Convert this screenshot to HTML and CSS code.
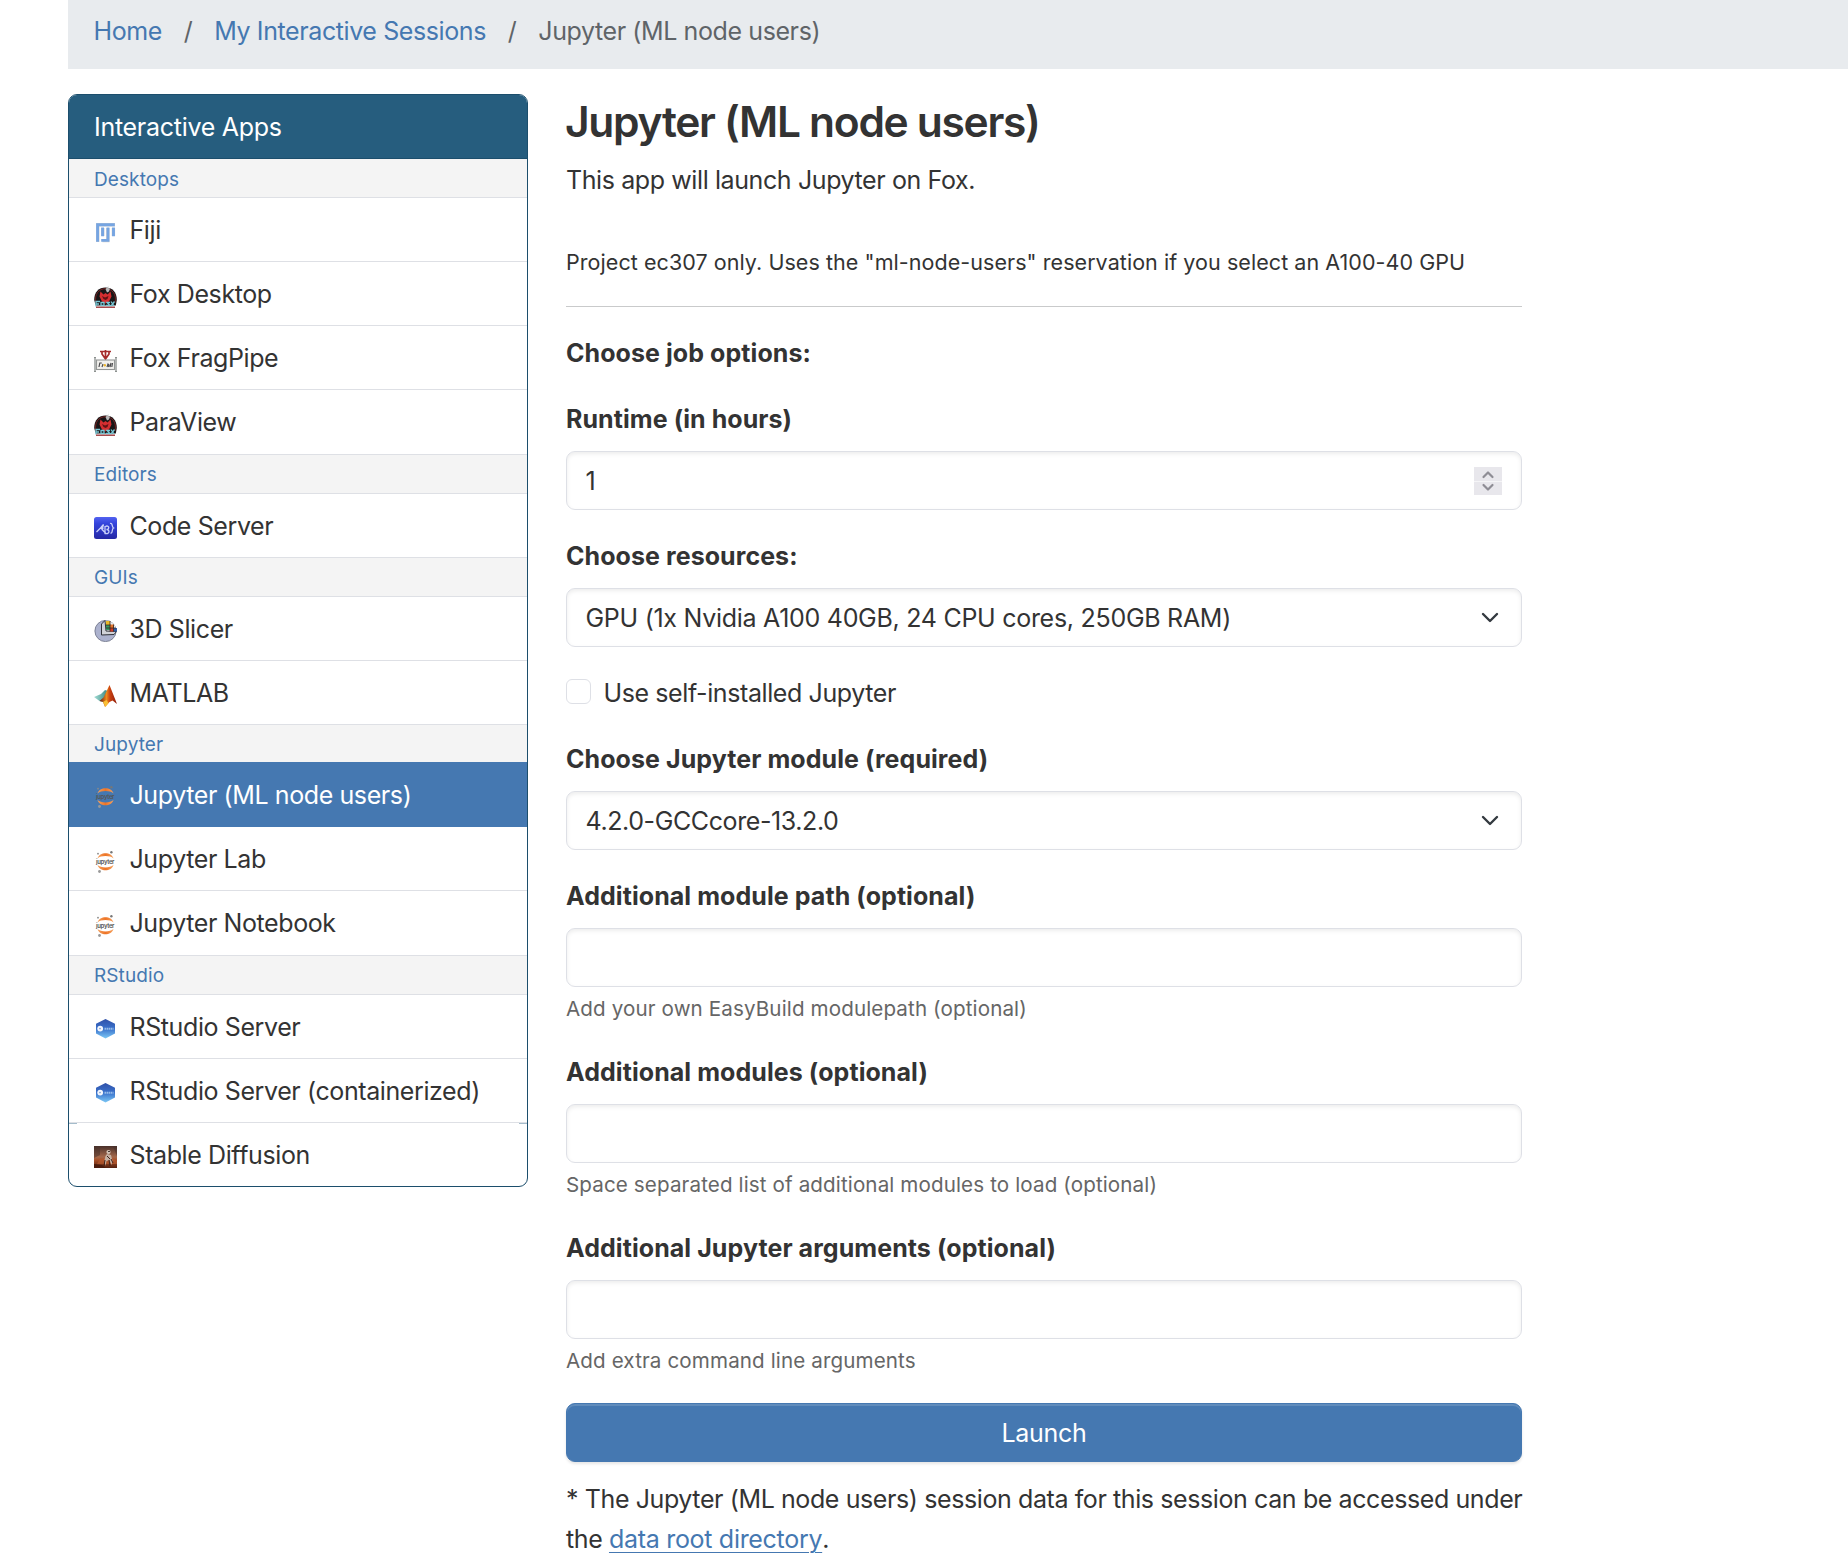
FILE: index.html
```html
<!DOCTYPE html>
<html lang="en">
<head>
<meta charset="utf-8">
<title>Jupyter (ML node users)</title>
<link rel="stylesheet" href="styles.css">
</head>
<body>
<svg class="gradients" aria-hidden="true">
  <defs>
    <linearGradient id="g-code" x1="0" y1="0" x2="0" y2="1"><stop offset="0" stop-color="#5362f0"/><stop offset=".3" stop-color="#3444dc"/><stop offset="1" stop-color="#2528a4"/></linearGradient>
    <linearGradient id="g-hex" x1="0" y1="0" x2="0" y2="1"><stop offset="0" stop-color="#2f50a8"/><stop offset=".5" stop-color="#3a72cc"/><stop offset="1" stop-color="#7cc8f5"/></linearGradient>
    <linearGradient id="g-mat" x1="0" y1="0" x2="1" y2="0"><stop offset="0" stop-color="#64140c"/><stop offset=".4" stop-color="#ee8a1c"/><stop offset=".6" stop-color="#c9400f"/><stop offset="1" stop-color="#8e1d0c"/></linearGradient>
    <linearGradient id="g-teal" x1="0" y1="0" x2="1" y2="0"><stop offset="0" stop-color="#a4ded6"/><stop offset="1" stop-color="#39857f"/></linearGradient>
    <linearGradient id="g-mars" x1="0" y1="0" x2="0" y2="1"><stop offset="0" stop-color="#49302a"/><stop offset=".5" stop-color="#a5694b"/><stop offset=".65" stop-color="#a64d26"/><stop offset="1" stop-color="#53200f"/></linearGradient>
    <linearGradient id="g-jup" x1="0" y1="0" x2="1" y2="0"><stop offset="0" stop-color="#f5a25f"/><stop offset=".5" stop-color="#ee7426"/><stop offset="1" stop-color="#f5a25f"/></linearGradient>
  </defs>
</svg>
<svg class="sprite" aria-hidden="true">
  <symbol id="fiji" viewBox="0 0 23 22">
    <g fill="none" stroke="#d5d2cf" stroke-width="3.400"><path d="M3.700 20V2.800H21M8.700 6v8M8.400 18.600h5.400V6M19.400 6v8"/></g>
    <g fill="none" stroke="#76a5e2" stroke-width="2.900"><path d="M3.600 19.800V2.700h17.200M8.600 5.500v8.800M7.200 18.400H14V5.500M19.500 5.500v8.800"/></g>
  </symbol>
  <symbol id="fox" viewBox="0 0 23 22">
    <path d="M.2 14C0 6 5 1.500 11.500 1.500S23 6 22.800 14l-1 5.500h-20z" fill="#191617"/>
    <path d="M2 17C0 8 5 2.700 11.500 2.700S23 8 21 17" fill="none" stroke="#8c2423" stroke-width=".8"/>
    <path d="M6.500 5.500l3 3 2-1.500 2 1.500 3-3 1 5-2.500 5-3.500 2-3.500-2-2.500-5z" fill="#d52e30"/>
    <path d="M8 10l3 1.600L14.500 10l-1 3-2 1-2-1z" fill="#611315"/>
    <path d="M11.500 3l3-3-.5 2 2 .5-1 3-2 1z" fill="#b9b9ba"/>
    <path d="M2 20.500v-5h4M2 18h3M7 16.500h3v3H7zM12 19.500h4l-3-3h3M17 15.500l3 4.500M20.500 15.500L17 20" fill="none" stroke="#78c8d6" stroke-width="1.300"/>
    <path d="M2 21.200h19" stroke="#962a2c" stroke-width="1.300"/>
  </symbol>
  <symbol id="frag" viewBox="0 0 23 22">
    <path d="M6 1.500h11M8 1v3l3.500 5L15 4V1M11.500 0v9" fill="none" stroke="#a62c2c" stroke-width="1.700"/>
    <path d="M1 7v15M22 7v15" stroke="#8c918f" stroke-width="2"/>
    <path d="M1 8v13M22 8v13" stroke="#eee" stroke-width=".8"/>
    <rect x="2.500" y="10" width="18" height="9.500" fill="#f1f0ed" stroke="#949796" stroke-width="1.100"/>
    <path d="M5 17l.8-4h2M8 17l1-3M13 17l1-3 1 1-.5 2M16 17l1-4M18.500 13l-.7 4" fill="none" stroke="#4d4d50" stroke-width="1.200"/>
    <circle cx="10.800" cy="15.300" r="1.200" fill="#edb52d"/>
  </symbol>
  <symbol id="code" viewBox="0 0 23 22">
    <rect width="23" height="22" rx="2.500" fill="url(#g-code)"/>
    <path d="M2.500 15l4-4 3-3.500-1.500 5 4 4M6.500 11l3 .5M11 9v7.500c5 1 5-4 1.500-4 4-.5 2-5-1-3M16 6.500c3-1 1.500 3.500 3.500 4.500-2 1-.5 5.500-3 5" fill="none" stroke="#c9cff9" stroke-width="1.300"/>
  </symbol>
  <symbol id="slicer" viewBox="0 0 23 22">
    <circle cx="11.500" cy="11" r="10.600" fill="#acb2ce" stroke="#6b7084" stroke-width=".8"/>
    <path d="M11 .5l.5 11 11 .5C23 6 18 .5 11 .5z" fill="#eceded"/>
    <path d="M11 .5L7.500 4v11L20 14.500l2.500-3L12 11z" fill="#d0d2d8" stroke="#303239"/>
    <path d="M12 1h4v4h-4z" fill="#e8ba28"/><path d="M12 5h4v5h-4z" fill="#359862"/><path d="M16 4.500h4v3.500h-4z" fill="#e4742c"/><path d="M16 8h3.500v3.500H16z" fill="#cc3b28"/><path d="M19.500 8H23v3.500h-3.500z" fill="#2e5ca5"/>
    <path d="M12 5h4.500M12 8h10M16 1v10.500M19.500 4.500v7" stroke="#382620" stroke-width=".8"/>
  </symbol>
  <symbol id="matlab" viewBox="0 0 23 22">
    <path d="M0 12l7-3 4-4 3 1-5 11-3.500-1z" fill="url(#g-teal)"/>
    <path d="M5.500 16l4-3.500L15.500 0 23 19l-4.500-3.500-3 1.500-4.500 5-2-5z" fill="url(#g-mat)"/>
    <path d="M9 17l2.500 5 3-4-2-3z" fill="#f9be35"/>
  </symbol>
  <symbol id="jupyter" viewBox="0 0 23 22">
    <path d="M3.500 7.500c2-7 14-7 16 0-3.500-3.200-12.500-3.200-16 0zM3.500 14c2 7 14 7 16 0-3.500 3.200-12.500 3.200-16 0z" fill="url(#g-jup)"/>
    <circle cx="17.400" cy="1.300" r="1.200" fill="#777"/><circle cx="4" cy="2.700" r=".9" fill="#888"/><circle cx="5.500" cy="20.500" r="1.400" fill="#999"/>
    <text x="2" y="12.500" textLength="18.500" font-family="Inter, sans-serif" font-size="6" font-weight="600" letter-spacing="0" fill="#555">jupyter</text>
  </symbol>
  <symbol id="rstudio" viewBox="0 0 23 22">
    <path d="M11.500 1L21 5.800v9.800L11.500 20.500 2 15.600V5.800z" fill="url(#g-hex)"/>
    <circle cx="6.200" cy="10.600" r="2.900" fill="#f2f6fd"/><circle cx="6" cy="10.600" r=".8" fill="#7796ca"/>
    <path d="M10.500 10.800h9" stroke="#96bce9" stroke-width="2" stroke-dasharray="1.500 .5"/>
  </symbol>
  <symbol id="stable" viewBox="0 0 23 22">
    <path d="M0 0h23v22H0z" fill="url(#g-mars)"/>
    <path d="M0 0h6v9l-6 3zM19 0h4v10z" fill="#44302b" opacity=".5"/>
    <path d="M6 13l12-1 5 3v3H3z" fill="#b5592d" opacity=".7"/>
    <circle cx="14.500" cy="6" r="2.100" fill="#d3c3b5"/>
    <path d="M13 8l4 1 1.500 6-1 4-2-5-3 1-1 5-1-6 1-4z" fill="#c4b0a2"/>
    <path d="M11 14l-1 6M15 14l1 6M17 13l2 4M13 10l3 3" stroke="#3f2119" stroke-width="1"/>
    <path d="M0 18l8 1 4 3H0z" fill="#4a1b0d"/><path d="M14 5.500h2" stroke="#453732"/>
  </symbol>
</svg>

<nav class="crumbs">
  <a href="#">Home</a><span class="sep">/</span><a href="#">My Interactive Sessions</a><span class="sep">/</span><span>Jupyter (ML node users)</span>
</nav>

<div class="layout">
  <aside class="apps">
    <div class="apps-head">Interactive Apps</div>
    <div class="group">Desktops</div>
    <a class="app"><svg><use href="#fiji"/></svg><span>Fiji</span></a>
    <a class="app"><svg><use href="#fox"/></svg><span>Fox Desktop</span></a>
    <a class="app"><svg><use href="#frag"/></svg><span>Fox FragPipe</span></a>
    <a class="app"><svg><use href="#fox"/></svg><span>ParaView</span></a>
    <div class="group">Editors</div>
    <a class="app"><svg><use href="#code"/></svg><span>Code Server</span></a>
    <div class="group">GUIs</div>
    <a class="app"><svg><use href="#slicer"/></svg><span>3D Slicer</span></a>
    <a class="app"><svg><use href="#matlab"/></svg><span>MATLAB</span></a>
    <div class="group before-active">Jupyter</div>
    <a class="app active"><svg><use href="#jupyter"/></svg><span>Jupyter (ML node users)</span></a>
    <a class="app"><svg><use href="#jupyter"/></svg><span>Jupyter Lab</span></a>
    <a class="app"><svg><use href="#jupyter"/></svg><span>Jupyter Notebook</span></a>
    <div class="group">RStudio</div>
    <a class="app"><svg><use href="#rstudio"/></svg><span>RStudio Server</span></a>
    <a class="app"><svg><use href="#rstudio"/></svg><span>RStudio Server (containerized)</span></a>
    <a class="app last"><svg><use href="#stable"/></svg><span>Stable Diffusion</span></a>
  </aside>

  <main class="form">
    <h1>Jupyter (ML node users)</h1>
    <p class="lead">This app will launch Jupyter on Fox.</p>
    <p class="note">Project ec307 only. Uses the "ml-node-users" reservation if you select an A100-40 GPU</p>
    <hr>
    <p class="label options">Choose job options:</p>
    <div class="label">Runtime (in hours)</div>
    <div class="control"><span>1</span>
      <svg class="spinner" viewBox="0 0 28 28"><path d="M0 0h28v28H0z" fill="#e8e7ec"/><path d="M0 14.500h28" stroke="#f5f5f7"/><path d="M9.500 10l4.500-4.500 4.500 4.500M9.500 18l4.500 4.500 4.500-4.500" fill="none" stroke="#8e8d95" stroke-width="2.200" stroke-linecap="round" stroke-linejoin="round"/></svg>
    </div>
    <div class="label">Choose resources:</div>
    <div class="control select"><span class="wide">GPU (1x Nvidia A100 40GB, 24 CPU cores, 250GB RAM)</span>
      <svg class="chevron" viewBox="0 0 18 12"><path d="M2 2l7 7 7-7" fill="none" stroke="#343a40" stroke-width="2.400" stroke-linecap="round" stroke-linejoin="round"/></svg>
    </div>
    <div class="check"><span class="box"></span><span>Use self-installed Jupyter</span></div>
    <div class="label">Choose Jupyter module (required)</div>
    <div class="control select"><span>4.2.0-GCCcore-13.2.0</span>
      <svg class="chevron" viewBox="0 0 18 12"><path d="M2 2l7 7 7-7" fill="none" stroke="#343a40" stroke-width="2.400" stroke-linecap="round" stroke-linejoin="round"/></svg>
    </div>
    <div class="label">Additional module path (optional)</div>
    <div class="control"></div>
    <div class="help">Add your own EasyBuild modulepath (optional)</div>
    <div class="label">Additional modules (optional)</div>
    <div class="control"></div>
    <div class="help">Space separated list of additional modules to load (optional)</div>
    <div class="label">Additional Jupyter arguments (optional)</div>
    <div class="control"></div>
    <div class="help">Add extra command line arguments</div>
    <button class="launch">Launch</button>
    <p class="foot">* The Jupyter (ML node users) session data for this session can be accessed under<br>the <a href="#">data root directory</a>.</p>
  </main>
</div>
</body>
</html>
```
FILE: styles.css
```css
* { box-sizing: border-box; }
body {
  margin: 0;
  height: 1564px;
  overflow: hidden;
  background: #fff;
  color: #333;
  font: 400 25px/40px Inter, "Liberation Sans", sans-serif;
  letter-spacing: -.4px;
}
a { color: #4578b1; text-decoration: none; }
p, h1 { margin: 0; }
.gradients { position: absolute; width: 0; height: 0; }
.sprite { display: none; }

.crumbs {
  display: flex;
  height: 69px;
  margin-left: 68px;
  padding: 11px 0 0 25.5px;
  background: #e8ebee;
  color: #5f6468;
  white-space: nowrap;
}
.sep { width: 52.3px; text-align: center; }

.layout { display: flex; gap: 38px; padding: 25px 0 0 68px; }

.apps {
  width: 460px;
  height: 1093px;
  border: 1px solid #1c4e6c;
  border-radius: 9px;
  overflow: hidden;
}
.apps-head {
  height: 64px;
  padding: 12px 25px 0;
  background: #265d7e;
  border-bottom: 1px solid #1c4e6c;
  color: #fff;
  letter-spacing: -.28px;
}
.group {
  height: 39px;
  padding-left: 25px;
  background: #f4f4f4;
  border-bottom: 1px solid #dee0e5;
  color: #4578b1;
  font-size: 19px;
  line-height: 40px;
  letter-spacing: .1px;
}
.apps-head + .group { line-height: 41px; }
.group.before-active { height: 38.4px; }
.app {
  display: flex;
  align-items: center;
  gap: 12.5px;
  height: 64.15px;
  padding-left: 25px;
  border-bottom: 1px solid #dee0e5;
  color: #333;
  white-space: nowrap;
}
.app svg { width: 23px; height: 22px; margin-top: 6.300px; }
.app span { margin-top: .9px; }
.app.active { margin-top: -1px; height: 64.9px; background: #4578b1; border-color: #4578b1; color: #fff; }
.app.last {
  border-bottom: 0;
  background:
    linear-gradient(#a5bccb, #a5bccb) left top / 8px 1px no-repeat,
    linear-gradient(#a5bccb, #a5bccb) right top / 8px 1px no-repeat;
}
.app.last svg { margin-top: 5px; }
.app.last span { margin-top: 0; }

.form { width: 956px; }
h1 { font-size: 42.5px; line-height: 55px; font-weight: 560; letter-spacing: -1.3px; text-indent: -1px; white-space: nowrap; }
.lead { margin-top: 11px; }
.note { margin-top: 45px; font-size: 21.5px; line-height: 34px; letter-spacing: .06px; white-space: nowrap; }
hr { height: 1px; margin: 27px 0 0; border: 0; background: #c9cacb; }
.label { height: 40px; margin: 26px 0 12px; font-weight: 700; letter-spacing: .07px; white-space: nowrap; }
.label.options { margin-bottom: 0; }
.control {
  display: flex;
  align-items: center;
  justify-content: space-between;
  height: 59px;
  padding: 0 19px 0 18.5px;
  border: 1px solid #dee0e6;
  border-radius: 9px;
  box-shadow: inset 0 2px 4px rgba(0, 0, 0, .075);
  white-space: nowrap;
}
.wide { letter-spacing: -.28px; }
.select { padding-right: 22px; }
.spinner { width: 28px; height: 28px; }
.chevron { width: 18px; height: 12px; }
.check { display: flex; gap: 12.5px; height: 40px; margin-top: 26px; white-space: nowrap; }
.box { width: 25px; height: 25px; margin-top: 6px; border: 1px solid #dee0e6; border-radius: 6px; }
.help { height: 34px; margin-top: 5px; color: #666; font-size: 20.6px; line-height: 33px; letter-spacing: .12px; white-space: nowrap; }
.launch {
  display: block;
  width: 956px;
  height: 59px;
  margin-top: 25px;
  padding: 0;
  border: 1px solid #4578b1;
  border-radius: 9px;
  background: #4578b1;
  box-shadow: inset 0 2px 0 rgba(255, 255, 255, .15), 0 2px 3px rgba(0, 0, 0, .1);
  color: #fff;
  font: inherit;
  letter-spacing: -.3px;
}
.foot { margin-top: 17px; white-space: nowrap; }
.foot a { letter-spacing: -.3px; text-decoration: underline; text-decoration-thickness: 1px; text-underline-offset: 4px; }
```
